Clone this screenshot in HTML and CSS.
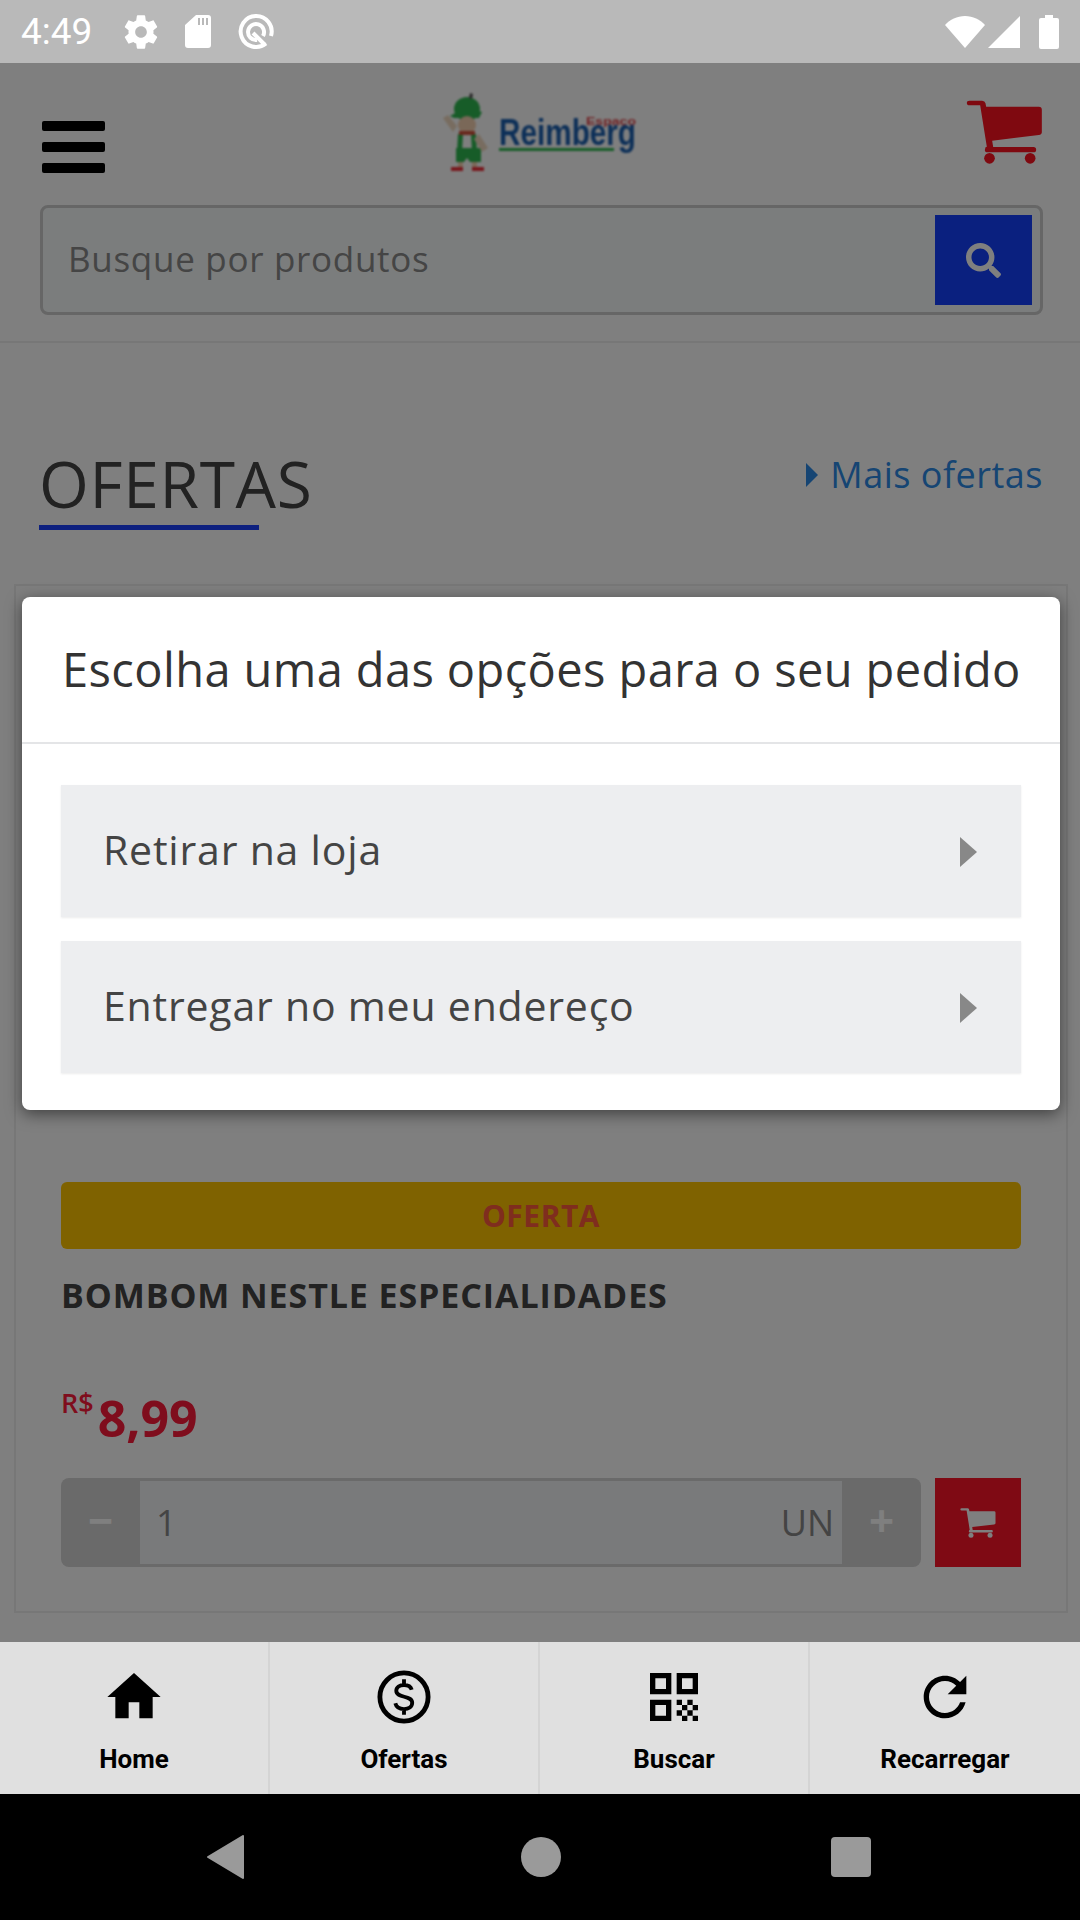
FILE: index.html
```html
<!DOCTYPE html>
<html lang="pt-BR">
<head>
    <meta charset="UTF-8">
    <meta name="viewport" content="width=device-width, initial-scale=1.0">
    <title>Espaço Reimberg</title>
    <link rel="stylesheet" href="styles.css">
</head>
<body>
    <div class="statusbar">
        <span class="clock">4:49</span>
        <svg class="st-gear" viewBox="0 0 24 24"><path d="M19.43 12.98c.04-.32.07-.64.07-.98s-.03-.66-.07-.98l2.11-1.65c.19-.15.24-.42.12-.64l-2-3.46c-.12-.22-.39-.3-.61-.22l-2.49 1c-.52-.4-1.08-.73-1.69-.98l-.38-2.65C14.46 2.18 14.25 2 14 2h-4c-.25 0-.46.18-.49.42l-.38 2.65c-.61.25-1.17.59-1.69.98l-2.49-1c-.23-.09-.49 0-.61.22l-2 3.46c-.13.22-.07.49.12.64l2.11 1.65c-.04.32-.07.65-.07.98s.03.66.07.98l-2.11 1.65c-.19.15-.24.42-.12.64l2 3.46c.12.22.39.3.61.22l2.49-1c.52.4 1.08.73 1.69.98l.38 2.65c.03.24.24.42.49.42h4c.25 0 .46-.18.49-.42l.38-2.65c.61-.25 1.17-.59 1.69-.98l2.49 1c.23.09.49 0 .61-.22l2-3.46c.12-.22.07-.49-.12-.64l-2.11-1.65zM12 15.5c-1.93 0-3.5-1.57-3.5-3.5s1.57-3.5 3.5-3.5 3.5 1.57 3.5 3.5-1.57 3.5-3.5 3.5z"/></svg>
        <svg class="st-sd" viewBox="0 0 26 33"><path fill-rule="evenodd" d="M11 0h12a3 3 0 0 1 3 3v27a3 3 0 0 1-3 3H3a3 3 0 0 1-3-3V10zM13 3v7h2V3zM17 3v7h2V3zM21 3v7h2V3z"/></svg>
        <svg class="st-q" viewBox="0 0 36 36"><path class="q-line" d="M28 29.500A15.500 15.500 0 1 1 33 22"/><path class="q-line" d="M25 22A8 8 0 1 0 19 26"/><path class="q-line" d="M15 19l12 12"/></svg>
        <span class="st-space"></span>
        <svg class="st-wifi" viewBox="0 0 40 32"><path d="M20 32L0 9C5 3.500 12 0 20 0s15 3.500 20 9z"/></svg>
        <svg class="st-signal" viewBox="0 0 32 32"><path d="M32 0v32H0z"/></svg>
        <svg class="st-batt" viewBox="0 0 20 34"><path d="M6 0h8v3h4a2 2 0 0 1 2 2v27a2 2 0 0 1-2 2H2a2 2 0 0 1-2-2V5a2 2 0 0 1 2-2h4z"/></svg>
    </div>

    <div class="main">
        <div class="top">
            <div class="burger"><span></span><span></span><span></span></div>
            <div class="logo">
                <svg viewBox="0 0 210 92" width="210" height="92">
                    <g transform="translate(-3 0)">
                        <ellipse cx="36" cy="21" rx="13" ry="12" fill="#2fb850"/>
                        <path d="M19 28q17-11 32-4l-3 6H23z" fill="#2fb850"/>
                        <path d="M38 10l1-5 3 1-1 5z" fill="#555"/>
                        <circle cx="36" cy="37" r="9" fill="#f5d0b0"/>
                        <path d="M29 44h14l7 28H24z" fill="#fff"/>
                        <path d="M27 46h5l-1 18h-5zM45 46h-5l1 18h5z" fill="#2fb850"/>
                        <path d="M25 60h25v14H39l-3-4-3 4h-8z" fill="#2fb850"/>
                        <path d="M28 43h16v4H28z" fill="#d0503a"/>
                        <path d="M22 44L12 30l5-3 9 11zM48 46l9 14-6 4-8-13z" fill="#f0d9c0"/>
                        <path d="M27 74h5v5h-5zM41 74h5v5h-5z" fill="#f5d0b0"/>
                        <path d="M20 79h12v4H20zM41 79h12v4H41z" fill="#f0303a"/>
                    </g>
                    <text class="logo-esp" x="152" y="37" textLength="50" lengthAdjust="spacingAndGlyphs">Espaço</text>
                    <text class="logo-name" x="65" y="57" textLength="137" lengthAdjust="spacingAndGlyphs">Reimberg</text>
                    <rect x="65" y="60" width="115" height="3" fill="#2fb850"/>
                </svg>
            </div>
            <svg class="cart-top" viewBox="50 28 230 192"><path d="M60 30H98Q106 30 108 38L110 48H268Q277 48 277 57V125Q277 132 268 133L128 150L131 169H252Q260 169 260 177Q260 185 252 185H114Q106 185 106 178L108 170L112 168L92 44H60Q52 44 52 37Q52 30 60 30z"/><circle cx="120" cy="203" r="16"/><circle cx="242" cy="203" r="16"/></svg>
        </div>

        <div class="search">
            <span class="search-ph">Busque por produtos</span>
            <div class="search-btn">
                <svg viewBox="0 0 512 512"><path d="M505 442.7L405.3 343c-4.500-4.500-10.600-7-17-7H372c27.600-35.300 44-79.700 44-128C416 93.100 322.900 0 208 0S0 93.100 0 208s93.100 208 208 208c48.300 0 92.700-16.400 128-44v16.300c0 6.400 2.500 12.500 7 17l99.700 99.700c9.400 9.400 24.600 9.400 33.900 0l28.300-28.300c9.400-9.400 9.400-24.600.1-34zM208 336c-70.700 0-128-57.200-128-128 0-70.700 57.200-128 128-128 70.700 0 128 57.200 128 128 0 70.700-57.200 128-128 128z"/></svg>
            </div>
        </div>

        <div class="section-head">
            <div class="section-title">
                <h2>OFERTAS</h2>
                <div class="underline"></div>
            </div>
            <a class="more"><i class="tri-more"></i>Mais ofertas</a>
        </div>

        <div class="card">
            <div class="card-photo"></div>
            <div class="badge">OFERTA</div>
            <div class="prod-name">BOMBOM NESTLE ESPECIALIDADES</div>
            <div class="price"><span class="cur">R$</span><span class="val">8,99</span></div>
            <div class="buy">
                <div class="qty">
                    <span class="qty-btn">&minus;</span>
                    <span class="qty-val"><span>1</span><span class="qty-un">UN</span></span>
                    <span class="qty-btn">+</span>
                </div>
                <div class="add">
                    <svg viewBox="50 28 230 192"><path d="M60 30H98Q106 30 108 38L110 48H268Q277 48 277 57V125Q277 132 268 133L128 150L131 169H252Q260 169 260 177Q260 185 252 185H114Q106 185 106 178L108 170L112 168L92 44H60Q52 44 52 37Q52 30 60 30z"/><circle cx="120" cy="203" r="16"/><circle cx="242" cy="203" r="16"/></svg>
                </div>
            </div>
        </div>

        <!-- dim layer + modal -->
        <div class="scrim"></div>
        <div class="modal">
            <div class="modal-head">Escolha uma das opções para o seu pedido</div>
            <div class="modal-body">
                <div class="option"><span>Retirar na loja</span><i class="tri-opt"></i></div>
                <div class="option"><span>Entregar no meu endereço</span><i class="tri-opt"></i></div>
            </div>
        </div>
    </div>

    <div class="tabs">
        <div class="tab">
            <svg viewBox="0 0 24 24"><path d="M10 20v-6h4v6h5v-8h3L12 3 2 12h3v8z"/></svg>
            <span>Home</span>
        </div>
        <div class="tab">
            <svg class="tab-coin" viewBox="0 0 56 56"><circle class="coin" cx="28" cy="28" r="25"/><path class="coin-s" d="M36 20.500c-1-3.500-4-5-8-5-4.500 0-8 2.300-8 6 0 8 16.500 4.500 16.500 12.500 0 4-3.800 6.500-8.500 6.500-4.500 0-8-2-9-6M28 9.500v6M28 40.500v6"/></svg>
            <span>Ofertas</span>
        </div>
        <div class="tab">
            <svg viewBox="0 0 24 24"><path d="M3 11h8V3H3v8zm2-6h4v4H5V5zM3 21h8v-8H3v8zm2-6h4v4H5v-4zM13 3v8h8V3h-8zm6 6h-4V5h4v4zM13 13h2v2h-2zM15 15h2v2h-2zM13 17h2v2h-2zM15 19h2v2h-2zM17 17h2v2h-2zM19 19h2v2h-2zM17 13h2v2h-2zM19 15h2v2h-2z"/></svg>
            <span>Buscar</span>
        </div>
        <div class="tab">
            <svg viewBox="0 0 24 24"><path d="M17.650 6.350C16.200 4.900 14.210 4 12 4c-4.420 0-7.990 3.580-7.990 8s3.570 8 7.990 8c3.730 0 6.840-2.550 7.730-6h-2.080c-.82 2.330-3.040 4-5.650 4-3.310 0-6-2.690-6-6s2.690-6 6-6c1.660 0 3.140.69 4.220 1.780L13 11h7V4l-2.350 2.350z"/></svg>
            <span>Recarregar</span>
        </div>
    </div>

    <div class="navbar">
        <svg class="nav-back" viewBox="0 0 37 44"><path d="M36 1v42L1 22z"/></svg>
        <span class="nav-home"></span>
        <span class="nav-recent"></span>
    </div>
</body>
</html>
```

FILE: styles.css
```css
* {
    box-sizing: border-box;
}

body {
    margin: 0;
    width: 1080px;
    height: 1920px;
    overflow: hidden;
    display: flex;
    flex-direction: column;
    font-family: "Open Sans", "Noto Sans", sans-serif;
    background: #fff;
}

/* status bar */
.statusbar {
    height: 63px;
    background: #b9b9b9;
    display: flex;
    align-items: center;
    padding: 0 21px;
    color: #fff;
}

.statusbar svg {
    fill: #fff;
    display: block;
}

.clock {
    font-family: "Roboto", sans-serif;
    font-size: 37px;
    width: 100px;
}

.st-gear {
    width: 40px;
    height: 40px;
}

.st-sd {
    width: 26px;
    height: 33px;
    margin-left: 24px;
}

.st-q {
    width: 36px;
    height: 36px;
    margin-left: 27px;
}

.q-line {
    fill: none;
    stroke: #fff;
    stroke-width: 4;
}

.st-space {
    flex: 1;
}

.st-wifi {
    width: 40px;
    height: 32px;
}

.st-signal {
    width: 32px;
    height: 32px;
    margin-left: 3px;
}

.st-batt {
    width: 20px;
    height: 34px;
    margin-left: 19px;
}

/* page under the modal */
.main {
    position: relative;
    height: 1579px;
    overflow: hidden;
}

.top {
    height: 142px;
    display: flex;
    justify-content: space-between;
    align-items: flex-start;
    padding: 0 37px 0 42px;
}

.burger {
    width: 63px;
    margin-top: 58px;
    display: flex;
    flex-direction: column;
    gap: 11px;
}

.burger span {
    height: 10px;
    background: #000;
    border-radius: 2px;
}

.logo {
    margin: 25px 0 0 7px;
    height: 92px;
    background: #fff;
    filter: blur(0.8px);
}

.logo svg {
    overflow: visible;
}

.logo-esp {
    font: bold 10px "Liberation Sans", sans-serif;
    fill: #e0454a;
}

.logo-name {
    font: bold 36px "Liberation Sans", sans-serif;
    fill: #1a5fb0;
}

.cart-top {
    width: 77px;
    height: 64px;
    margin-top: 37px;
    fill: #ff1220;
}

.search {
    height: 110px;
    margin: 0 37px 0 40px;
    border: 3px solid #ccc;
    border-radius: 8px;
    background: #f6fafa;
    display: flex;
    align-items: center;
    justify-content: space-between;
    padding: 0 8px 0 25px;
}

.search-ph {
    font-size: 35px;
    letter-spacing: 0.7px;
    margin-top: -4px;
    color: #8a8a8a;
}

.search-btn {
    width: 97px;
    height: 90px;
    background: #1440ff;
    display: flex;
    align-items: center;
    justify-content: center;
}

.search-btn svg {
    width: 35px;
    height: 35px;
    fill: #fff;
}

.section-head {
    margin-top: 26px;
    border-top: 2px solid #eee;
    height: 243px;
    padding: 0 37px 0 39px;
    display: flex;
    justify-content: space-between;
    align-items: flex-start;
}

.section-title {
    margin-top: 103px;
}

.section-title h2 {
    margin: 0;
    font-size: 64px;
    letter-spacing: 0.7px;
    line-height: 76px;
    font-weight: 400;
    color: #444;
    white-space: nowrap;
}

.underline {
    width: 220px;
    height: 5px;
    margin-top: 3px;
    background: #1a40ff;
}

.more {
    margin-top: 110px;
    font-size: 36px;
    letter-spacing: 0.5px;
    line-height: 44px;
    color: #2c8ae6;
    display: flex;
    align-items: center;
}

.tri-more {
    width: 0;
    height: 0;
    margin-right: 12px;
    border-left: 12px solid #2c8ae6;
    border-top: 12px solid transparent;
    border-bottom: 12px solid transparent;
}

.card {
    margin: 0 12px 0 14px;
    height: 1029px;
    border: 2px solid #eee;
    padding: 0 45px;
}

.card-photo {
    height: 596px;
}

.badge {
    height: 67px;
    border-radius: 6px;
    background: #ffc400;
    color: #ff5a3c;
    font-size: 30px;
    letter-spacing: 0.5px;
    font-weight: 700;
    text-align: center;
    line-height: 67px;
}

.prod-name {
    margin-top: 26px;
    font-size: 34px;
    letter-spacing: 0.9px;
    line-height: 40px;
    font-weight: 700;
    color: #444;
    white-space: nowrap;
}

.price {
    margin-top: 73px;
    height: 61px;
    display: flex;
    align-items: flex-start;
    color: #ff1a3a;
    font-weight: 700;
}

.cur {
    font-size: 27px;
    line-height: 32px;
    font-weight: 600;
    margin: -1px 4px 0 0;
}

.val {
    font-size: 50px;
    line-height: 60px;
}

.buy {
    margin-top: 29px;
    display: flex;
    gap: 14px;
}

.qty {
    flex: 1;
    height: 89px;
    border-radius: 8px;
    background: #d4d4d4;
    display: flex;
    overflow: hidden;
}

.qty-btn {
    width: 79px;
    color: #fff;
    font-size: 44px;
    font-weight: 700;
    text-align: center;
    line-height: 84px;
}

.qty-val {
    flex: 1;
    margin: 3px 0;
    padding: 0 8px 0 16px;
    background: #f2f5f7;
    display: flex;
    align-items: center;
    justify-content: space-between;
    font-size: 36px;
    color: #888;
}

.add {
    width: 86px;
    height: 89px;
    background: #ff1428;
    display: flex;
    align-items: center;
    justify-content: center;
}

.add svg {
    width: 36px;
    height: 30px;
    fill: #fff;
}

/* dim + modal */
.scrim {
    position: absolute;
    inset: 0;
    background: rgba(0, 0, 0, 0.5);
}

.modal {
    position: absolute;
    left: 22px;
    top: 534px;
    width: 1038px;
    height: 513px;
    background: #fff;
    border-radius: 8px;
    box-shadow: 0 4px 16px rgba(0, 0, 0, 0.5);
}

.modal-head {
    height: 147px;
    border-bottom: 2px solid #e4e5e7;
    padding-left: 40px;
    font-size: 47px;
    letter-spacing: 0.4px;
    line-height: 144px;
    color: #333;
    white-space: nowrap;
}

.modal-body {
    padding: 41px 39px 0;
    display: flex;
    flex-direction: column;
    gap: 24px;
}

.option {
    height: 132px;
    background: #edeef0;
    box-shadow: 0 1px 2px rgba(0, 0, 0, 0.08);
    padding: 0 44px 4px 42px;
    display: flex;
    align-items: center;
    justify-content: space-between;
    font-size: 41px;
    letter-spacing: 0.8px;
    color: #444;
}

.tri-opt {
    width: 0;
    height: 0;
    margin-top: 6px;
    border-left: 17px solid #888;
    border-top: 15px solid transparent;
    border-bottom: 15px solid transparent;
}

/* bottom tabs */
.tabs {
    height: 152px;
    background: #e0e0e0;
    display: grid;
    grid-template-columns: repeat(4, 1fr);
}

.tab {
    display: flex;
    flex-direction: column;
    align-items: center;
    padding-top: 23px;
    border-right: 2px solid #d4d4d4;
    font-family: "Roboto", sans-serif;
    font-size: 26px;
    font-weight: 700;
    color: #000;
}

.tab:last-child {
    border-right: none;
}

.tab svg {
    width: 64px;
    height: 64px;
    margin-bottom: 15px;
}

.tab .tab-coin {
    width: 54px;
    height: 54px;
    margin: 5px 0 20px;
}

.coin {
    fill: none;
    stroke: #000;
    stroke-width: 5;
}

.coin-s {
    fill: none;
    stroke: #000;
    stroke-width: 4;
}

/* android nav */
.navbar {
    flex: 1;
    background: #000;
    display: flex;
    align-items: center;
    padding-left: 207px;
}

.nav-back {
    width: 37px;
    height: 44px;
    fill: #9a9a9a;
    stroke: #9a9a9a;
    stroke-width: 2;
    stroke-linejoin: round;
}

.nav-home {
    width: 40px;
    height: 40px;
    margin-left: 277px;
    border-radius: 50%;
    background: #9a9a9a;
}

.nav-recent {
    width: 40px;
    height: 40px;
    margin-left: 270px;
    border-radius: 4px;
    background: #9a9a9a;
}
```
